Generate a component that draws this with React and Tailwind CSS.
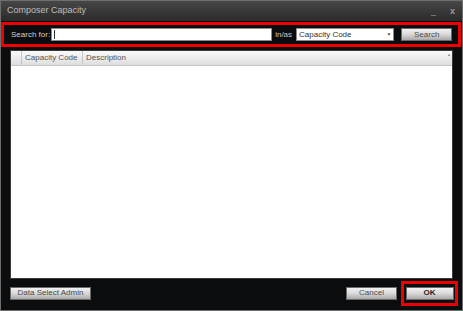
import React from 'react';

const GrayButton = ({ children, className = '' }) => (
    <button
        className={`h-[13px] flex items-center justify-center border border-[#6a6a6a] bg-gradient-to-b from-[#f2f2f2] via-[#d8d8d8] to-[#a9a9a9] text-[8px] leading-none text-[#4a4a4a] ${className}`}
    >
        {children}
    </button>
);

const ComposerCapacity = () => {
    return (
        <div className="w-[463px] h-[311px] flex flex-col bg-[#0b0c0e] border border-[#6e6e6e] font-['Liberation_Sans',Arial,sans-serif] overflow-hidden">
            {/* Title bar */}
            <div className="h-[20px] shrink-0 flex items-center justify-between pl-[6px] pr-[7px] bg-gradient-to-b from-[#474747] to-[#2a2a2a] text-[#bdbdbd]">
                <span className="text-[9px]">Composer Capacity</span>
                <div className="flex items-center gap-[14px] text-[9px] text-[#9a9a9a]">
                    <span className="leading-none">_</span>
                    <span className="leading-none font-bold">x</span>
                </div>
            </div>

            {/* Search strip */}
            <div className="h-[25px] shrink-0 mt-[1px] mr-[1px] border-[3px] border-[#ee0000] flex items-center pl-[7px] pr-[6px]">
                <span className="text-[8px] text-[#d0d0d0] w-[40px]">Search for:</span>
                <div className="w-[223px] h-[13px] bg-white border border-[#8a8a8a] flex items-center pl-[2px]">
                    <div className="w-px h-[9px] bg-[#333]" />
                </div>
                <span className="text-[8px] text-[#c8c8c8] mx-[3px] w-[18px]">in/as</span>
                <div className="w-[99px] h-[13px] bg-white border border-[#8a8a8a] flex items-center justify-between px-[2px]">
                    <span className="text-[8px] text-[#333]">Capacity Code</span>
                    <span className="text-[5px] text-[#555]">▼</span>
                </div>
                <GrayButton className="w-[51px] ml-[7px]">Search</GrayButton>
            </div>

            {/* Grid */}
            <div className="flex-1 mt-[3px] mx-[9px] flex flex-col bg-white border border-[#3a3a3a]">
                <div className="h-[15px] flex items-stretch bg-gradient-to-b from-[#fafafa] to-[#dedede] border-b border-[#c8c8c8] text-[8px] text-[#555]">
                    <div className="w-[11px] border-r border-[#c4c4c4]" />
                    <div className="w-[61px] border-r border-[#c4c4c4] flex items-center pl-[3px]">Capacity Code</div>
                    <div className="flex-1 flex items-center pl-[3px]">Description</div>
                    <div className="w-[6px] flex items-start justify-center text-[4px] text-[#888] pt-[1px]">▲</div>
                </div>
                <div className="flex-1" />
            </div>

            {/* Footer */}
            <div className="h-[28px] shrink-0 flex items-center pl-[9px] pr-[4px]">
                <GrayButton className="w-[81px]">Data Select Admin</GrayButton>
                <div className="flex-1" />
                <GrayButton className="w-[51px]">Cancel</GrayButton>
                <div className="ml-[4px] w-[57px] h-[25px] border-[3px] border-[#ee0000] flex items-center justify-center">
                    <GrayButton className="w-[48px] font-bold text-[#222]">OK</GrayButton>
                </div>
            </div>
            <div className="h-[3px] shrink-0" />
        </div>
    );
};

export default function App() {
    return <ComposerCapacity />;
}
